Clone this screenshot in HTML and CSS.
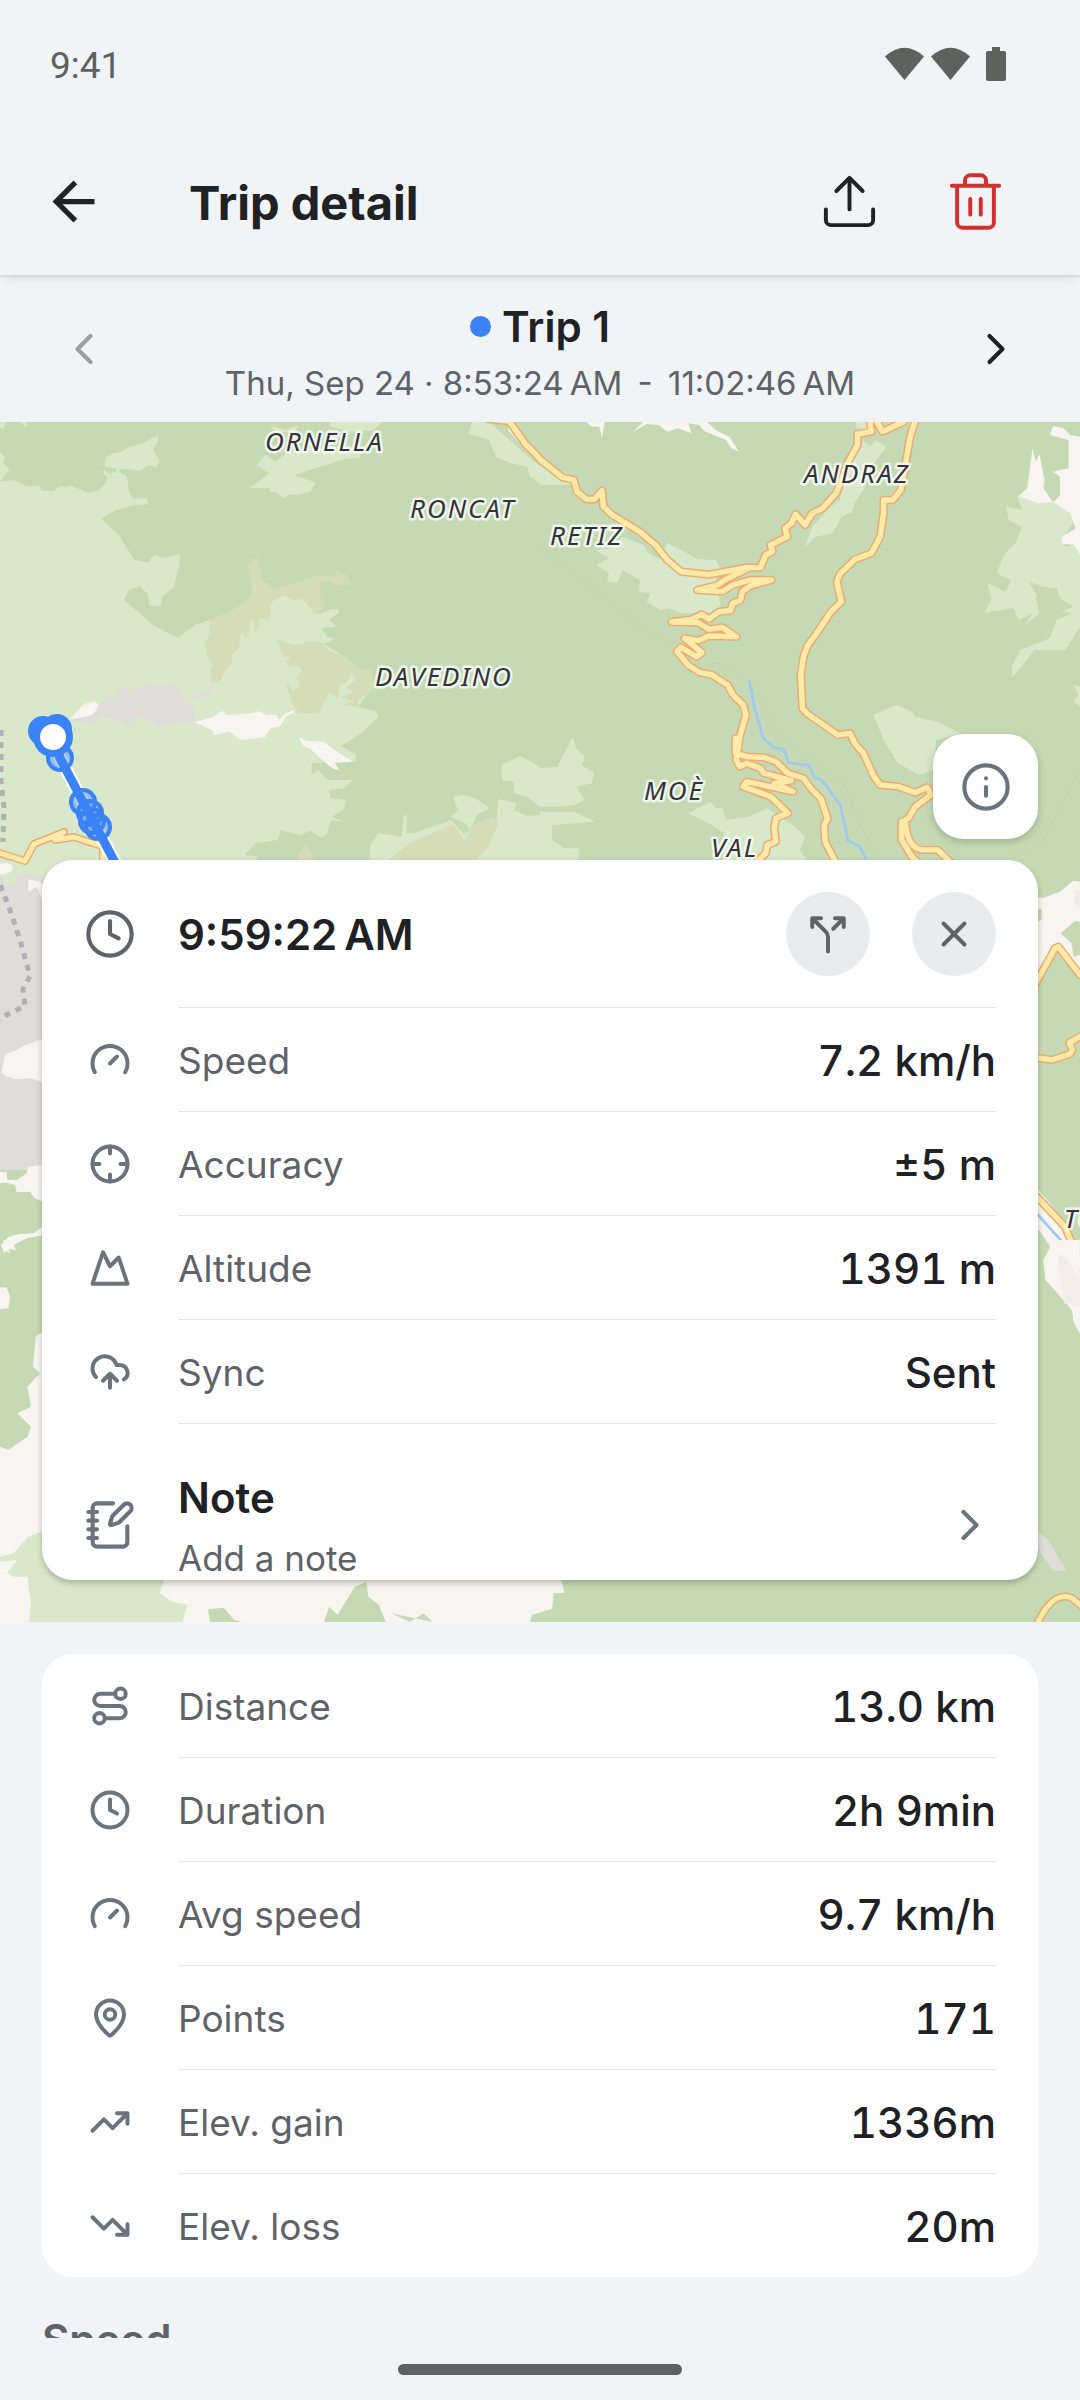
FILE: index.html
```html
<!DOCTYPE html>
<html lang="en">
<head>
<meta charset="utf-8">
<meta name="viewport" content="width=device-width, initial-scale=1">
<title>Trip detail</title>
<link rel="stylesheet" href="styles.css">
</head>
<body>
<div class="status-bar">
  <span>9:41</span>
  <svg class="status-icons" viewBox="0 0 122 36" aria-hidden="true">
    <path d="M0 9.500Q19.500-8 39 9.500L19.500 33Z"/>
    <path d="M46 9.500Q65.500-8 85 9.500L65.500 33Z"/>
    <path d="M107 0h8v4h4q2 0 2 2v26q0 2-2 2h-16q-2 0-2-2v-26q0-2 2-2h4z"/>
  </svg>
</div>

<header class="app-bar">
  <button class="icon-button" aria-label="Back">
    <svg class="icon-lg solid" viewBox="0 0 24 24"><path d="M20 11H7.830l5.590-5.590L12 4l-8 8 8 8 1.410-1.410L7.830 13H20v-2z"/></svg>
  </button>
  <h1>Trip detail</h1>
  <div class="app-actions">
    <button class="icon-button" aria-label="Export">
      <svg class="icon-lg" viewBox="0 0 24 24"><path d="M21 15v4a2 2 0 0 1-2 2H5a2 2 0 0 1-2-2v-4M17 8l-5-5-5 5M12 3v12"/></svg>
    </button>
    <button class="icon-button danger" aria-label="Delete">
      <svg class="icon-lg" viewBox="0 0 24 24"><path d="M3 6h18M19 6v14a2 2 0 0 1-2 2H7a2 2 0 0 1-2-2V6M8 6V4a2 2 0 0 1 2-2h4a2 2 0 0 1 2 2v2M10 11v6M14 11v6"/></svg>
    </button>
  </div>
</header>

<nav class="trip-nav" aria-label="Trips">
  <button class="icon-button" aria-label="Previous trip" disabled>
    <svg class="icon-md" viewBox="0 0 24 24"><path d="m15 18-6-6 6-6"/></svg>
  </button>
  <div class="trip-info">
    <h2><span class="trip-dot"></span>Trip 1</h2>
    <p>Thu, Sep 24 · 8:53:24&#8239;AM &#8201;-&#8201; 11:02:46&#8239;AM</p>
  </div>
  <button class="icon-button" aria-label="Next trip">
    <svg class="icon-md" viewBox="0 0 24 24"><path d="m9 18 6-6-6-6"/></svg>
  </button>
</nav>

<main>
  <section class="map" aria-label="Map">
    <svg class="map-canvas" viewBox="0 0 1080 1200" preserveAspectRatio="xMidYMid slice">
      <defs>
        <path id="roads-north" d="M-190-30-150-3-90 3-40 75-15 100 0 118 65 172 98 180 108 215 135 238 158 238 180 212 184 260 210 285 290 335 335 375 370 420 410 455 490 464 600 443 640 443 655 405 675 395 670 375 718 350 712 325 730 310 742 283 770 315 790 280 820 265 860 220 895 125 922 75 922 42 962 35 958 0M975 0 995 35 1055 6M1090 0 1075 50 1048 210 1025 240 998 240 998 275 988 350 962 400 915 418 872 460 862 485 875 545 845 575 800 645 778 675 765 710 757 765 762 865 775 880 865 945 900 940 915 972 938 998 970 1070 988 1095 1040 1100 1090 1118 1125 1102 1135 1125 1090 1160 1070 1195 1050 1205 1050 1260 1080 1310 1100 1330M1060 1200Q1065 1285 1110 1290L1155 1290 1200 1335M600 448 545 475 515 495 457 510 530 515 560 495 610 480 672 480 610 498 588 515 582 540 560 550 553 572 520 575 490 597 470 583 440 598 382 606 460 608 490 628 528 622 570 650 490 648 460 662 420 655 470 698 455 710 408 682 398 695 430 735 465 758 500 765 545 795 560 825 590 855 598 885 580 950 570 1020 580 1040 600 1030 640 1045 650 1060 730 1082 680 1090 735 1115 600 1085 590 1100 670 1130 720 1180 685 1195 680 1225 685 1265 660 1275 655 1300 630 1325M568 955 568 1000 600 1010 650 1012 685 1025 720 1060 765 1075 790 1110 815 1135 835 1195 825 1215 828 1265 860 1330"/>
        <path id="roads-east" d="M0 480 50 395 105 295 115 290 180 375M0 620 65 625 95 630 150 612 157 600 148 578 180 560M0 990 55 1045 135 1130 190 1265"/>
        <path id="road-south" d="M1036 1204C1050 1174 1062 1172 1072 1176L1084 1186"/>
        <path id="road-west" d="M-4 430 25 439 34 422 64 410 55 418 74 415 92 421 103 424 103 450"/>
      </defs>
      <rect class="forest" width="1080" height="1200"/>

      <!-- north-west -->
      <g transform="translate(0 -2) scale(.3444 .3333)">
        <path class="grass" d="M0 185 38 180 80 198 112 198 122 213 155 213 175 199 190 202 204 196 253 218 288 211 310 185 312 175 298 155 305 150 313 158 337 157 340 145 305 140 306 113 330 100 355 95 375 80 410 72 458 45 460 62 445 88 462 122 455 143 432 135 405 153 375 147 350 148 345 155 368 168 374 210 385 237 425 234 431 253 390 255 335 271 294 296 345 345 390 420 432 427 440 410 457 405 470 415 523 402 520 440 505 502 471 530 466 557 433 557 429 521 405 499 374 511 360 540 447 617 516 654 568 615 608 600 720 560 780 560 795 540 825 525 855 540 877 532 914 580 930 582 960 568 985 567 985 577 955 600 977 620 932 623 950 650 973 657 940 672 1000 710 1045 748 1080 800 1040 862 1090 872 1098 890 1055 935 990 978 1033 1003 1033 1023 970 1028 905 1028 905 1065 925 1050 950 1080 1025 1080 1000 1105 955 1110 960 1135 1005 1140 1000 1165 965 1190 1003 1207 960 1200 945 1260 900 1232 870 1245 815 1230 805 1260 740 1270 710 1305 745 1310 760 1345 0 1345Z"/>
        <path class="grass" d="M0 95 15 115 8 128 28 150 0 183ZM0 6h20l-12 20-8-3zM58 6h20v18zM725 205 760 178 780 160 745 135 770 105 800 125 830 100 900 85 1000 80 1050 98 1045 112 1000 118 900 150 855 165 880 175 918 188 900 215 870 224 840 224 822 234 800 215 780 216 785 205ZM785 18 830 30 867 15 855 35 800 38ZM955 6 1110 6 1085 30 1020 35 960 20ZM1370 6 1420 6 1480 60 1568 140 1568 192 1540 170 1530 140 1480 128 1440 110 1420 60 1360 40ZM1075 1330 1075 1275 1100 1240 1165 1250 1172 1190 1182 1182 1180 1240 1200 1240 1310 1200 1345 1240 1448 1210 1480 1165 1530 1188 1568 1185 1568 1330ZM1315 1130 1345 1125 1380 1135 1422 1165 1385 1185 1365 1230 1350 1210 1308 1190 1330 1170ZM1455 1035 1510 1008 1568 1040 1568 1160 1530 1130 1495 1120 1490 1085 1458 1080ZM1448 1138 1500 1150 1480 1200 1440 1220Z"/>
        <path class="forest" d="M800 1280 830 1250 850 1290 880 1265 870 1320 840 1300 830 1330ZM760 1300 790 1290 770 1325ZM895 1290 950 1240 960 1290 930 1300 935 1330 900 1325Z"/>
        <path class="scrub" d="M608 600 680 568 724 535 733 506 720 438 746 410 763 482 798 506 925 467 970 468 980 445 990 460 1002 460 1025 500 1005 490 975 497 960 482 932 487 928 525 944 560 914 582 877 534 855 542 825 525 795 542 780 555 789 580 778 600 754 595 750 630 740 635 735 595 725 610 722 650 712 655 700 635 695 680 674 705 672 735 650 755 645 775 630 788 612 785 610 750 618 738 600 705 596 675 610 635ZM804 657 830 665 850 675 910 662 935 668 955 692 990 705 1045 748 1075 747 1090 800 1040 840 1040 862 995 855 1025 845 990 828 1030 820 1005 800 1033 780 1022 757 1005 790 985 795 982 838 955 815 928 878 868 880 850 855 828 785 850 810 870 800 862 775 878 750 865 738 838 740 830 725 845 710 822 710ZM1115 1330 1190 1270 1315 1212 1352 1265 1370 1215 1430 1190 1448 1210 1415 1285 1375 1330ZM865 1310 888 1272 910 1305 905 1325 870 1325Z"/>
        <path class="rock" d="M200 900 255 880 290 850 320 828 340 825 340 805 365 797 375 810 435 792 470 800 500 793 530 812 533 858 555 848 566 870 566 915 535 905 500 910 458 922 400 885 375 916 335 905 325 890 290 893 265 915 245 905ZM555 830 600 820 615 788 622 795 608 825 590 835 560 838Z"/>
        <path class="cream" d="M200 900 245 852 275 843 288 855 270 884ZM566 907 620 890 645 872 660 885 735 880 750 873 775 885 800 884 812 900 825 882 858 868 850 880 830 890 812 920 785 925 770 952 700 960 665 935 622 945 615 930ZM868 952 890 962 940 966 985 1000 1025 1025 972 1028 987 1052 965 1045 930 1015 900 985 880 978ZM0 1330 30 1330 36 1345 0 1345ZM1475 20 1520 60 1510 70 1475 30ZM1540 85 1560 95 1545 105Z"/>
      </g>

      <!-- north-east -->
      <g transform="translate(540 -2) scale(.3444 .3333)">
        <path class="grass" d="M0 130 40 140 85 165 95 195 0 195ZM240 350 300 375 315 400 350 420 370 370 420 395 455 418 510 420 525 450 510 480 525 560 500 580 410 580 375 565 350 570 310 545 320 520 285 515 290 480 240 450 225 490 195 485 200 460 165 435 200 415 160 390 210 385ZM925 50 960 80 975 60 1005 80 970 130 945 140 945 200 915 245 905 275 875 290 850 340 800 350 770 380 790 320 840 265 870 240 900 130ZM1355 260 1400 270 1385 225 1450 250 1500 240 1540 270 1553 300 1515 360 1525 380 1560 375 1568 405 1568 560 1568 620 1525 690 1435 690 1395 745 1370 773 1370 740 1395 690 1480 655 1500 600 1545 580 1490 570 1480 530 1450 505 1440 535 1450 580 1410 615 1430 580 1390 600 1375 565 1290 578 1310 540 1300 490 1350 515 1370 480 1325 460 1350 400 1380 370 1400 320 1360 300ZM968 885 1000 870 1035 855 1080 875 1090 890 1155 905 1220 940 1150 960 1145 1050 1100 1065 1040 1030 1000 965ZM0 1045 50 1040 75 990 95 950 105 985 130 1010 120 1035 157 1060 150 1090 105 1100 130 1140 100 1155 60 1160 0 1160ZM0 1175 100 1175 160 1205 35 1215 35 1260 70 1285 113 1285 110 1330 0 1330ZM430 1180 495 1145 510 1165 530 1165 540 1200 605 1190 660 1165 735 1215 770 1250 755 1290 780 1330 530 1330 535 1240 500 1215ZM1550 795 1568 800 1568 860 1550 845 1562 825ZM915 6h45v20h-40z"/>
        <path class="forest" d="M1420 485 1460 500 1500 505 1510 535 1550 560 1500 580 1475 545 1450 540ZM1470 605 1500 590 1480 650 1440 660 1400 670Z"/>
        <path class="cream" d="M135 6 188 6 180 55 172 20 150 20ZM300 6 485 6 510 30 550 50 578 95 555 85 540 60 480 35 462 15 430 10 440 40 400 25 370 35 345 15 310 12 270 35ZM1480 45 1490 18 1520 25 1540 45 1568 50 1568 405 1550 375 1515 370 1515 350 1555 325 1540 280 1490 245 1445 250 1390 228 1415 205 1430 85 1440 125 1450 100 1465 180 1462 205 1490 248 1510 225 1510 170 1475 145 1490 155 1535 145 1535 60Z"/>
        <path class="faint" d="M0 382 340 660 410 670M480 745Q515 700 590 780L610 785 690 950 880 1090 980 1330M1568 1040 1460 1270 1350 1320"/>
        <path class="river" d="M607 782 625 870 648 955 680 983 708 988 722 1028 780 1036 796 1072 818 1080 872 1155 894 1262 928 1278 952 1330"/>
        <use href="#roads-north" class="casing"/>
        <use href="#roads-north" class="road"/>
      </g>

      <!-- west strip beside the card -->
      <g transform="translate(0 428) scale(.3333)">
        <path class="grass" d="M0-20H160V130H0Z"/>
        <path class="cream" d="M0 40 20 38 38 48 35 65 5 75 0 70Z"/>
        <path class="rock" d="M0 80 20 100 55 105 45 75 70 70 130 85 160 100 160 960 0 960Z"/>
        <path class="cream" d="M85 88 120 95 160 140 125 145 110 110 85 125ZM160 565 125 568 70 588 50 600 15 613 5 665 15 678 50 688 95 685 125 697 160 700ZM0 965 20 965 22 990 50 990 80 970 85 950 160 940 160 1080 0 1080Z"/>
        <path class="forest" d="M0 1000 20 998 45 1005 50 1027 90 1025 105 1045 160 1070 160 1900 0 1900Z"/>
        <path class="cream" d="M160 1125 125 1132 100 1150 60 1152 25 1160 3 1185 10 1200 30 1208 25 1198 50 1200 40 1185 80 1165 160 1150ZM0 1312 20 1312 30 1340 25 1375 0 1378ZM160 1440 112 1455 115 1490 160 1540Z"/>
      </g>

      <!-- east strip beside the card -->
      <g transform="translate(1020 428) scale(.3333)">
        <path class="cream" d="M0 140 70 143 120 125 160 92 180 95 180 215 165 213 122 250 155 280 160 320 180 315 180 370 130 300 100 290 50 390 0 420ZM0 990 50 1015 90 1060 180 1200 180 1450 165 1425 155 1380 75 1285 105 1210 50 1130 0 1080Z"/>
        <path class="forest" d="M50 175 65 178 65 210 50 215Z"/>
        <path class="built" d="M165 120 180 120 180 175 160 160ZM75 1235 120 1205 160 1240 180 1290 180 1360 120 1340 115 1300Z"/>
        <path class="river" d="M0 1040 50 1090 140 1190 180 1280"/>
        <use href="#roads-east" class="casing"/>
        <use href="#roads-east" class="road"/>
      </g>

      <!-- south edge -->
      <g transform="translate(0 818) scale(.6887 .3333)">
        <path class="cream" d="M5 0 30 0 5 40ZM80 250 52 290 48 380 58 400 40 440 45 500 25 520 45 560 40 590 12 630 0 620 0 1146 250 1146 800 1146 804 1060 820 1060 810 980 80 980Z"/>
        <path class="grass" d="M80 860 40 890 20 940 0 950 0 965 25 960 10 1000 20 1010 40 1010 45 1090 42 1146 265 1146 272 1095 250 1085 232 1060 240 1010 80 980Z"/>
        <path class="forest" d="M302 1108 325 1103 340 1140 352 1146 305 1146ZM470 1146 478 1100 490 1125 515 1040 532 1026 535 1070 550 1095 560 1146ZM568 1120 595 1146 615 1120 628 1146ZM820 1060 804 1060 804 1105 772 1125 770 1146 1568 1146 1568 280 1500 280 1500 980 812 980Z"/>
        <path class="cream" d="M1515 60 1530 0 1568 0 1568 280 1558 240 1558 190 1540 170 1518 120Z"/>
        <path class="built" d="M1535 40 1550 60 1568 120 1568 200 1545 190Z"/>
        <path class="rock" d="M1500 860 1522 900 1548 990 1530 995 1510 935Z"/>
      </g>
      <g class="roads-full">
        <use href="#road-south" class="casing"/>
        <use href="#road-south" class="road"/>
        <use href="#road-west" class="casing"/>
        <use href="#road-west" class="road"/>
      </g>

      <path class="boundary" d="M1 308V360L4 385 3 420M-4 452 10 488 20 518 30 554 23 567 25 584-4 598"/>

      <g class="track">
        <path class="track-halo" d="M53 315 60 336 83 380 117 444 140 485"/>
        <path class="track-line" d="M53 315 60 336 83 380 117 444 140 485"/>
        <g class="track-point">
          <circle cx="60" cy="336" r="12"/><circle cx="83" cy="380" r="12"/><circle cx="90" cy="391" r="12"/><circle cx="92" cy="399" r="12"/><circle cx="98" cy="405" r="12"/>
        </g>
        <circle class="track-fill" cx="43" cy="309" r="15"/>
        <circle class="track-fill" cx="57" cy="307" r="15"/>
        <circle class="track-fill" cx="53" cy="315" r="20"/>
        <circle class="track-head" cx="53" cy="315" r="13"/>
      </g>

      <g class="place">
        <text x="265" y="29">ORNELLA</text>
        <text x="410" y="96">RONCAT</text>
        <text x="550" y="123">RETIZ</text>
        <text x="804" y="61">ANDRAZ</text>
        <text x="375" y="264">DAVEDINO</text>
        <text x="644" y="378">MOÈ</text>
        <text x="711" y="435">VAL</text>
        <text x="1064" y="806">TOLL</text>
      </g>
    </svg>

    <div class="map-overlay">
      <button class="info-button" aria-label="Map information">
        <svg class="icon-md" viewBox="0 0 24 24"><circle cx="12" cy="12" r="10"/><path d="M12 16v-4M12 8h.010"/></svg>
      </button>

      <article class="card point-card">
        <header class="point-head">
          <svg class="icon-md" viewBox="0 0 24 24"><circle cx="12" cy="12" r="10"/><path d="M12 6v6l4 2"/></svg>
          <div class="point-title">
            <h3>9:59:22&#8239;AM</h3>
            <button class="round-button" aria-label="Split trip"><svg class="icon-sm" viewBox="0 0 24 24"><path d="M16 3h5v5M8 3H3v5M12 22v-8.300a4 4 0 0 0-1.172-2.872L3 3M15 9l6-6"/></svg></button>
            <button class="round-button" aria-label="Close"><svg class="icon-sm" viewBox="0 0 24 24"><path d="M18 6 6 18M6 6l12 12"/></svg></button>
          </div>
        </header>
        <dl>
          <div class="row">
            <svg class="icon-sm" viewBox="0 0 24 24"><path d="m12 14 4-4M3.340 19a10 10 0 1 1 17.320 0"/></svg>
            <div class="row-body"><dt>Speed</dt><dd>7.2 km/h</dd></div>
          </div>
          <div class="row">
            <svg class="icon-sm" viewBox="0 0 24 24"><circle cx="12" cy="12" r="10"/><path d="M22 12h-4M6 12H2M12 6V2M12 22v-4"/></svg>
            <div class="row-body"><dt>Accuracy</dt><dd>±5 m</dd></div>
          </div>
          <div class="row">
            <svg class="icon-sm" viewBox="0 0 24 24"><path d="m8 3 4 8 5-5 5 15H2L8 3z"/></svg>
            <div class="row-body"><dt>Altitude</dt><dd>1391 m</dd></div>
          </div>
          <div class="row">
            <svg class="icon-sm" viewBox="0 0 24 24"><path d="M12 13v8M4 14.899A7 7 0 1 1 15.710 8h1.790a4.500 4.500 0 0 1 2.500 8.242M8 17l4-4 4 4"/></svg>
            <div class="row-body"><dt>Sync</dt><dd>Sent</dd></div>
          </div>
        </dl>
        <button class="note">
          <svg class="icon-md" viewBox="0 0 24 24"><path d="M13.400 2H6a2 2 0 0 0-2 2v16a2 2 0 0 0 2 2h12a2 2 0 0 0 2-2v-7.400M2 6h4M2 10h4M2 14h4M2 18h4M21.378 5.626a1 1 0 1 0-3.004-3.004l-5.010 5.012a2 2 0 0 0-.506.854l-.837 2.870a.5.5 0 0 0 .620.620l2.870-.837a2 2 0 0 0 .854-.506z"/></svg>
          <span class="note-text"><strong>Note</strong><span>Add a note</span></span>
          <svg class="icon-md" viewBox="0 0 24 24"><path d="m9 18 6-6-6-6"/></svg>
        </button>
      </article>
    </div>
  </section>

  <section class="card stats-card" aria-label="Summary">
    <dl>
      <div class="row">
        <svg class="icon-sm" viewBox="0 0 24 24"><circle cx="6" cy="19" r="3"/><path d="M9 19h8.500a3.500 3.500 0 0 0 0-7h-11a3.500 3.500 0 0 1 0-7H15"/><circle cx="18" cy="5" r="3"/></svg>
        <div class="row-body"><dt>Distance</dt><dd>13.0 km</dd></div>
      </div>
      <div class="row">
        <svg class="icon-sm" viewBox="0 0 24 24"><circle cx="12" cy="12" r="10"/><path d="M12 6v6l4 2"/></svg>
        <div class="row-body"><dt>Duration</dt><dd>2h 9min</dd></div>
      </div>
      <div class="row">
        <svg class="icon-sm" viewBox="0 0 24 24"><path d="m12 14 4-4M3.340 19a10 10 0 1 1 17.320 0"/></svg>
        <div class="row-body"><dt>Avg speed</dt><dd>9.7 km/h</dd></div>
      </div>
      <div class="row">
        <svg class="icon-sm" viewBox="0 0 24 24"><path d="M20 10c0 4.993-5.539 10.193-7.399 11.799a1 1 0 0 1-1.202 0C9.539 20.193 4 14.993 4 10a8 8 0 0 1 16 0"/><circle cx="12" cy="10" r="3"/></svg>
        <div class="row-body"><dt>Points</dt><dd>171</dd></div>
      </div>
      <div class="row">
        <svg class="icon-sm" viewBox="0 0 24 24"><path d="M22 7l-8.500 8.500-5-5L2 17M16 7h6v6"/></svg>
        <div class="row-body"><dt>Elev. gain</dt><dd>1336m</dd></div>
      </div>
      <div class="row">
        <svg class="icon-sm" viewBox="0 0 24 24"><path d="M22 17l-8.500-8.500-5 5L2 7M16 17h6v-6"/></svg>
        <div class="row-body"><dt>Elev. loss</dt><dd>20m</dd></div>
      </div>
    </dl>
  </section>

  <h2 class="section-title">Speed</h2>
</main>

<footer class="gesture-bar"><span class="gesture-handle"></span></footer>
</body>
</html>
```
FILE: styles.css
```css
:root {
  --bg: #f0f4f7;
  --surface: #ffffff;
  --text: #202124;
  --muted: #5f6368;
  --icon: #6b737c;
  --accent: #3b82f6;
  --danger: #d32f2f;
  --divider: #e5e6e8;
}

* {
  box-sizing: border-box;
  margin: 0;
}

body {
  display: flex;
  flex-direction: column;
  height: 100vh;
  overflow: hidden;
  background: var(--bg);
  color: var(--text);
  font-family: Inter, "Liberation Sans", sans-serif;
}

button {
  padding: 0;
  border: 0;
  background: none;
  color: inherit;
  font: inherit;
  text-align: left;
}

svg {
  display: block;
  flex: none;
}

.icon-sm,
.icon-md,
.icon-lg {
  fill: none;
  stroke: currentColor;
  stroke-linecap: round;
  stroke-linejoin: round;
}

.icon-sm { width: 42px; height: 42px; stroke-width: 2.25; }
.icon-md { width: 52px; height: 52px; stroke-width: 1.9; }
.icon-lg { width: 63px; height: 63px; stroke-width: 1.5; }
.solid { fill: currentColor; stroke: none; }

/* System status bar */
.status-bar {
  display: flex;
  flex: none;
  align-items: center;
  justify-content: space-between;
  height: 128px;
  padding: 2px 73px 0 50px;
  color: #5f615f;
  font: 37px/44px Roboto, sans-serif;
}

.status-bar span { padding-top: 2px; }

.status-icons {
  width: 122px;
  height: 36px;
  fill: currentColor;
}

/* App bar */
.app-bar {
  position: relative;
  z-index: 1;
  display: flex;
  flex: none;
  align-items: center;
  gap: 84px;
  height: 147px;
  padding: 0 73px 0 42px;
  background: var(--bg);
  box-shadow: 0 2px 2px rgba(0, 0, 0, .08), 0 10px 10px -4px rgba(0, 0, 0, .06);
}

.app-bar h1 {
  flex: 1;
  padding-top: 2px;
  font-size: 47px;
  line-height: 56px;
  font-weight: 700;
}

.app-actions {
  display: flex;
  gap: 63px;
}

.danger { color: var(--danger); }

/* Trip switcher */
.trip-nav {
  display: flex;
  flex: none;
  align-items: center;
  justify-content: space-between;
  height: 147px;
  padding: 0 58px;
}

.trip-nav button:disabled { opacity: .4; }

.trip-info {
  padding-top: 12px;
  text-align: center;
}

.trip-info h2 {
  display: flex;
  align-items: center;
  justify-content: center;
  gap: 11px;
  font-size: 42px;
  line-height: 56px;
  font-weight: 600;
}

.trip-dot {
  width: 21px;
  height: 21px;
  border-radius: 50%;
  background: var(--accent);
}

.trip-info p {
  color: var(--muted);
  font-size: 33px;
  line-height: 56px;
}

/* Scrolling content */
main {
  flex: 1;
  min-height: 0;
  overflow: hidden;
}

.map {
  position: relative;
  height: 1200px;
  overflow: hidden;
}

.map-canvas {
  width: 100%;
  height: 100%;
}

.forest { fill: #c5dab4; }
.grass { fill: #d9e8ca; }
.scrub { fill: #d6dcb6; }
.rock { fill: #e0ddd9; }
.cream { fill: #f8f4ef; }
.built { fill: #f2ede8; }

.faint { fill: none; stroke: #bdd2ad; stroke-width: 2; }
.river { fill: none; stroke: #a0c8f0; stroke-width: 8; }

.casing,
.road {
  fill: none;
  stroke-linecap: round;
  stroke-linejoin: round;
}

.casing { stroke: #e9ac77; stroke-width: 25; }
.road { stroke: #ffeaa8; stroke-width: 16; }
.roads-full .casing { stroke-width: 8; }
.roads-full .road { stroke-width: 5; }

.boundary {
  fill: none;
  stroke: #b0b0b0;
  stroke-width: 5;
  stroke-dasharray: 6 6;
}

.track-halo { fill: none; stroke: #fff; stroke-width: 13; }
.track-line { fill: none; stroke: var(--accent); stroke-width: 9; }

.track-point {
  fill: rgba(59, 130, 246, .4);
  stroke: var(--accent);
  stroke-width: 4;
}

.track-fill { fill: var(--accent); }
.track-head { fill: #fff; }

.place {
  fill: #333338;
  stroke: rgba(255, 255, 255, .75);
  stroke-width: 5;
  stroke-linejoin: round;
  paint-order: stroke;
  font: italic 26px "Noto Sans", sans-serif;
  letter-spacing: 2px;
}

.map-overlay {
  position: absolute;
  inset: 0;
  display: flex;
  flex-direction: column;
  align-items: flex-end;
  justify-content: flex-end;
  gap: 21px;
  padding: 42px;
}

.info-button {
  display: grid;
  place-items: center;
  width: 105px;
  height: 105px;
  border-radius: 31px;
  background: var(--surface);
  color: var(--icon);
  box-shadow: 0 3px 8px rgba(0, 0, 0, .2);
}

/* Cards */
.card {
  border-radius: 31px;
  background: var(--surface);
}

.point-card {
  align-self: stretch;
  padding: 0 42px;
  box-shadow: 0 3px 6px rgba(0, 0, 0, .24);
}

.point-head {
  display: flex;
  align-items: center;
  gap: 42px;
  color: var(--muted);
}

.point-title {
  display: flex;
  flex: 1;
  align-items: center;
  gap: 42px;
  padding: 32px 0 31px;
  border-bottom: 1px solid var(--divider);
}

.point-title h3 {
  flex: 1;
  padding-top: 2px;
  color: var(--text);
  font-size: 42px;
  line-height: 56px;
  font-weight: 600;
}

.round-button {
  display: grid;
  place-items: center;
  width: 84px;
  height: 84px;
  border-radius: 50%;
  background: #e8ecef;
}

.row {
  display: flex;
  align-items: center;
  gap: 47px;
  padding-left: 5px;
  color: var(--icon);
}

.row-body {
  display: flex;
  flex: 1;
  align-items: center;
  justify-content: space-between;
  padding: 25px 0 22px;
  border-bottom: 1px solid var(--divider);
}

dt {
  color: var(--muted);
  font-size: 37px;
  line-height: 56px;
}

dd {
  color: var(--text);
  font-size: 42px;
  line-height: 56px;
  font-weight: 500;
  font-variant-numeric: tabular-nums;
}

.note {
  display: flex;
  align-items: center;
  gap: 42px;
  width: 100%;
  padding-top: 46px;
  color: var(--icon);
}

.note-text {
  display: flex;
  flex: 1;
  flex-direction: column;
  gap: 10px;
  color: var(--muted);
  font-size: 35px;
  line-height: 44px;
}

.note-text strong {
  color: var(--text);
  font-size: 42px;
  line-height: 56px;
  font-weight: 600;
}

.stats-card {
  margin: 32px 42px 0;
  padding: 0 42px;
}

.stats-card .row:last-child .row-body { border-bottom: 0; }

.section-title {
  margin: 37px 42px 0;
  color: var(--muted);
  font-size: 42px;
  line-height: 52px;
  font-weight: 600;
}

/* System gesture bar */
.gesture-bar {
  display: flex;
  flex: none;
  align-items: center;
  justify-content: center;
  height: 62px;
}

.gesture-handle {
  width: 284px;
  height: 11px;
  border-radius: 6px;
  background: #5f615f;
}
```
